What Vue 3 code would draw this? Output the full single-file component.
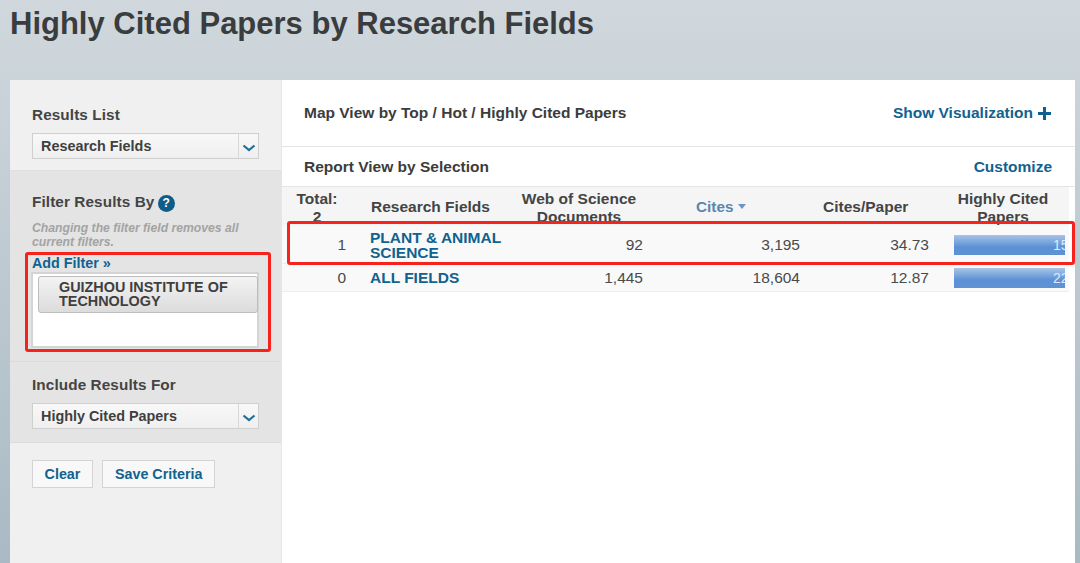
<script setup>
const rows = [
  { rank: 1, field: ['PLANT & ANIMAL', 'SCIENCE'], docs: '92', cites: '3,195', ratio: '34.73', hcp: '15', tall: true },
  { rank: 0, field: ['ALL FIELDS'], docs: '1,445', cites: '18,604', ratio: '12.87', hcp: '22', tall: false }
]
</script>

<template>
  <div class="page">
    <h1 class="title">Highly Cited Papers by Research Fields</h1>
    <div class="panel">
      <aside class="side">
        <section class="sec first">
          <div class="label">Results List</div>
          <div class="select">
            <span class="sel-text">Research Fields</span>
            <span class="sel-btn"><svg width="14" height="8" viewBox="0 0 14 8"><path d="M1.5 1.5 7 6l5.500-4.500" fill="none" stroke="#1f6f9c" stroke-width="2.200"/></svg></span>
          </div>
        </section>
        <section class="sec filter">
          <div class="label">Filter Results By <span class="help">?</span></div>
          <p class="hint">Changing the filter field removes all current filters.</p>
          <a class="add">Add Filter »</a>
          <div class="filter-box">
            <div class="chip">GUIZHOU INSTITUTE OF TECHNOLOGY</div>
          </div>
          <div class="red red-left"></div>
        </section>
        <section class="sec include">
          <div class="label">Include Results For</div>
          <div class="select">
            <span class="sel-text">Highly Cited Papers</span>
            <span class="sel-btn"><svg width="14" height="8" viewBox="0 0 14 8"><path d="M1.5 1.5 7 6l5.500-4.500" fill="none" stroke="#1f6f9c" stroke-width="2.200"/></svg></span>
          </div>
        </section>
        <section class="sec actions">
          <button class="btn clear">Clear</button>
          <button class="btn">Save Criteria</button>
        </section>
      </aside>
      <main class="main">
        <div class="bar map">
          <span class="bar-title">Map View by Top / Hot / Highly Cited Papers</span>
          <a class="link">Show Visualization <svg class="plus" width="15" height="15" viewBox="0 0 15 15"><path d="M7.500 1v13M1 7.500h13" stroke="#0f6090" stroke-width="3"/></svg></a>
        </div>
        <div class="bar report">
          <span class="bar-title">Report View by Selection</span>
          <a class="link">Customize</a>
        </div>
        <div class="table">
          <div class="row head">
            <div class="c rank">Total:<br>2</div>
            <div class="c field">Research Fields</div>
            <div class="c docs">Web of Science<br>Documents</div>
            <div class="c cites">Cites <i class="tri"></i></div>
            <div class="c ratio">Cites/Paper</div>
            <div class="c hcp">Highly Cited<br>Papers</div>
          </div>
          <div v-for="r in rows" :key="r.rank" class="row body" :class="{ tall: r.tall }">
            <div class="c rank">{{ r.rank }}</div>
            <div class="c field"><template v-for="l in r.field" :key="l">{{ l }}<br></template></div>
            <div class="c docs">{{ r.docs }}</div>
            <div class="c cites">{{ r.cites }}</div>
            <div class="c ratio">{{ r.ratio }}</div>
            <div class="c hcp"><div class="meter">{{ r.hcp }}</div></div>
          </div>
          <div class="red red-row"></div>
        </div>
      </main>
    </div>
  </div>
</template>

<style>
html, body { margin: 0; height: 100%; overflow: hidden; }
</style>

<style scoped>
.page {
  width: 1080px; height: 563px; overflow: hidden; box-sizing: border-box;
  padding-left: 10px;
  background: linear-gradient(180deg, #d0d8dd 0, #cad3d9 90px, #a9bac4 100%);
  font-family: "Liberation Sans", Arial, sans-serif;
  color: #3c3c3c;
}
.title { margin: 0; height: 80px; font-size: 31px; line-height: 47px; font-weight: 700; color: #3a3c3e; }
.panel { display: flex; width: 1065px; height: 483px; background: #fff; }
.side { width: 272px; flex: none; box-sizing: border-box; background: #f0f0f0; border-right: 1px solid #e6e6e6; display: flex; flex-direction: column; }
.sec { padding-left: 22px; padding-right: 22px; box-sizing: border-box; position: relative; }
.first { height: 90px; padding-top: 26px; }
.filter { height: 192px; padding-top: 22px; background: #e4e4e4; border-top: 1px solid #e0e0e0; border-bottom: 1px solid #dadada; }
.include { height: 81px; padding-top: 14px; background: #e4e4e4; border-bottom: 1px solid #dcdcdc; }
.actions { padding-top: 17px; display: flex; gap: 9px; align-items: flex-start; }
.label { font-size: 15.300px; line-height: 18px; font-weight: 700; color: #444; letter-spacing: 0.1px; }
.select { margin-top: 9px; height: 26px; box-sizing: border-box; border: 1px solid #cfcfcf; display: flex; background: linear-gradient(#f8f8f8, #efefef); }
.sel-text { flex: 1; font-size: 14.400px; line-height: 24px; font-weight: 700; padding-left: 8px; color: #3f3f3f; }
.sel-btn { width: 20px; border-left: 1px solid #d8d8d8; display: flex; align-items: center; justify-content: center; padding-top: 4px; box-sizing: border-box; }
.help { display: inline-block; width: 17px; height: 17px; border-radius: 50%; background: #0f5c88; color: #fff; font-size: 12px; line-height: 17px; text-align: center; margin-left: -1px; vertical-align: 0; }
.hint { margin: 9px 0 0; font-size: 12.200px; line-height: 14px; font-style: italic; font-weight: 700; color: #a3a3a3; }
.add { display: block; margin-top: 6px; font-size: 14.300px; line-height: 16px; font-weight: 700; color: #10628f; }
.filter-box { margin: 1px 0 0 -1px; height: 76px; box-sizing: border-box; border: 2px solid #d4d4d4; background: #fff; padding: 2px 0 0 5px; }
.chip { margin-right: -1px; height: 37px; box-sizing: border-box; border: 1px solid #bdbdbd; border-radius: 3px; background: linear-gradient(#f3f3f3, #dcdcdc); font-size: 14.400px; line-height: 14px; font-weight: 700; padding: 3px 20px 0 20px; color: #3f3f3f; }
.red { position: absolute; box-sizing: border-box; border: 3px solid #f5231c; border-radius: 3px; pointer-events: none; }
.red-left { left: 15px; top: 81px; width: 246px; height: 100px; }
.btn { height: 28px; box-sizing: border-box; padding: 0 12px; border: 1px solid #d4d4d4; background: #f8f8f8; font: 700 14.300px "Liberation Sans", Arial, sans-serif; color: #10628f; }
.clear { width: 61px; padding: 0; }
.main { flex: 1; min-width: 0; }
.bar { display: flex; justify-content: space-between; align-items: center; box-sizing: border-box; padding: 0 23px 0 22px; border-bottom: 1px solid #e4e4e4; }
.map { height: 67px; }
.report { height: 40px; }
.bar-title { font-size: 15.500px; font-weight: 700; color: #3c3c3c; }
.link { display: flex; align-items: center; gap: 4px; font-size: 15.500px; font-weight: 700; color: #10628f; }
.plus { display: block; }
.table { position: relative; width: 787px; }
.row { display: grid; grid-template-columns: 70px 158px 138px 155px 137px 129px; overflow: hidden; box-sizing: border-box; }
.c { box-sizing: border-box; }
.head { height: 39px; background: #f5f5f5; font-size: 15.500px; line-height: 18px; font-weight: 700; color: #444; }
.head .c { text-align: center; padding-top: 3px; white-space: nowrap; }
.head .field { text-align: left; padding-top: 11px; padding-left: 19px; }
.head .cites { text-align: left; color: #5c86ad; padding: 11px 0 0 48px; font-size: 15.300px; }
.head .ratio { text-align: left; padding-top: 11px; padding-left: 20px; }
.head .hcp { padding-right: 3px; }
.tri { display: inline-block; width: 0; height: 0; border: 4.500px solid transparent; border-top: 5px solid #6c94c4; border-bottom: 0; margin-left: 0; vertical-align: 3px; }
.body { background: #f9f9f9; font-size: 15.500px; color: #4a4a4a; }
.tall { height: 38px; border-bottom: 1px solid #eee; }
.body:not(.tall) { height: 28px; border-bottom: 1px solid #eee; }
.body .c { display: flex; align-items: center; justify-content: flex-end; }
.body .rank { padding-right: 6px; }
.body .field { display: block; align-self: center; padding-left: 18px; font-weight: 700; line-height: 15px; color: #10628f; white-space: nowrap; }
.body .docs { padding-right: 5px; }
.body .cites { padding-right: 3px; }
.body .ratio { padding-right: 11px; }
.body .hcp { padding-left: 14px; justify-content: flex-start; }
.meter { width: 111px; height: 20px; box-sizing: border-box; padding-left: 99px; background: linear-gradient(#a9c4e6, #5c91d6 60%, #5f92d3); color: #dfeafa; font-size: 14px; line-height: 20px; overflow: hidden; white-space: nowrap; }
.red-row { left: 5px; top: 34px; width: 788px; height: 44px; }
</style>
